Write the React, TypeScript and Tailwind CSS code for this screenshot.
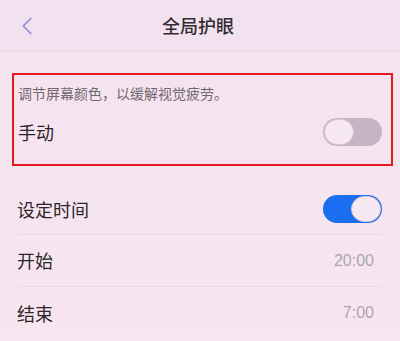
import { ChevronLeft } from 'lucide-react';

const font = { fontFamily: '"Noto Sans CJK SC", "Noto Sans", sans-serif' };

function Toggle({ on }: { on: boolean }) {
  return (
    <div
      className={`flex h-[28px] w-[59px] items-center rounded-full p-[1px] ${
        on ? 'justify-end bg-[#1a6ff0]' : 'justify-start bg-[#c8b3c5]'
      }`}
    >
      <div className="h-[26px] w-[30px] rounded-full border border-[#d9c4d4] bg-[#f7e9f3]" />
    </div>
  );
}

export default function App() {
  return (
    <div
      className="flex h-[341px] w-[400px] flex-col overflow-hidden bg-gradient-to-b from-[#f4e3ef] to-[#f7e6f0] text-[#2b2528]"
      style={font}
    >
      <div className="flex h-[52px] items-center border-b border-[#ead6e4] bg-[#f2e1ee] pl-[12px] pr-4">
        <ChevronLeft className="h-[30px] w-[30px] text-[#8e8ad8]" strokeWidth={1.4} />
        <div className="flex-1 pr-[30px] text-center text-[18px] font-medium text-[#332c31]">
          全局护眼
        </div>
      </div>

      <div className="ml-[12px] mr-[7px] mt-[21px] h-[93px] border-2 border-[#e31b1f] px-[4px]">
        <div className="pt-[8px] text-[14px] leading-[20px] text-[#72676f]">
          调节屏幕颜色，以缓解视觉疲劳。
        </div>
        <div className="mt-[15px] flex items-center justify-between pr-[5px]">
          <span className="text-[18px]">手动</span>
          <Toggle on={false} />
        </div>
      </div>

      <div className="px-[17px]">
        <div className="flex h-[69px] items-center justify-between border-b border-[#ecd9e5] pr-[1px] pt-[18px]">
          <span className="text-[18px]">设定时间</span>
          <Toggle on={true} />
        </div>
        <div className="flex h-[52px] items-center justify-between border-b border-[#ecd9e5] pr-[9px]">
          <span className="text-[18px]">开始</span>
          <span className="text-[16px] text-[#aea5ab]" style={{ fontFamily: '"Liberation Sans", sans-serif' }}>
            20:00
          </span>
        </div>
        <div className="flex h-[52px] items-center justify-between pr-[9px]">
          <span className="text-[18px]">结束</span>
          <span className="text-[16px] text-[#aea5ab]" style={{ fontFamily: '"Liberation Sans", sans-serif' }}>
            7:00
          </span>
        </div>
      </div>
    </div>
  );
}
